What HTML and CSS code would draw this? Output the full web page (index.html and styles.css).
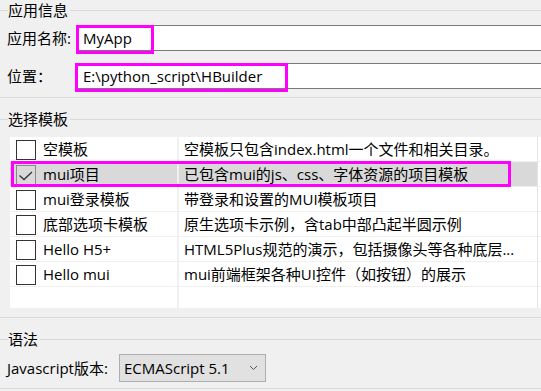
FILE: index.html
```html
<!DOCTYPE html>
<html lang="zh-CN">
<head>
<meta charset="utf-8">
<title>新建移动App</title>
<link rel="stylesheet" href="styles.css">
</head>
<body>
<section class="group g-app">
  <div class="legend"><span>应用信息</span></div>
  <div class="field-row r1">
    <span class="label">应用名称:</span>
    <div class="field"><span class="val">MyApp</span><span class="mark m1"></span></div>
  </div>
  <div class="field-row r2">
    <span class="label">位置：</span>
    <div class="field"><span class="val">E:\python_script\HBuilder</span><span class="mark m2"></span></div>
  </div>
</section>

<section class="group g-tpl">
  <div class="legend"><span>选择模板</span></div>
  <div class="list">
    <div class="row">
      <div class="cell c1"><span class="cb"></span><span class="txt">空模板</span></div>
      <div class="cell c2"><span class="txt">空模板只包含index.html一个文件和相关目录。</span></div>
      <div class="cell c3"></div>
    </div>
    <div class="row sel">
      <div class="cell c1"><span class="cb on"><svg width="18" height="18" viewBox="0 0 18 18"><path d="M2.5 9.5 L7 13.5 L15 6" fill="none" stroke="#333" stroke-width="1.3"/></svg></span><span class="txt">mui项目</span></div>
      <div class="cell c2"><span class="txt">已包含mui的js、css、字体资源的项目模板</span></div>
      <div class="cell c3"></div>
    </div>
    <div class="row">
      <div class="cell c1"><span class="cb"></span><span class="txt">mui登录模板</span></div>
      <div class="cell c2"><span class="txt">带登录和设置的MUI模板项目</span></div>
      <div class="cell c3"></div>
    </div>
    <div class="row">
      <div class="cell c1"><span class="cb"></span><span class="txt">底部选项卡模板</span></div>
      <div class="cell c2"><span class="txt">原生选项卡示例，含tab中部凸起半圆示例</span></div>
      <div class="cell c3"></div>
    </div>
    <div class="row">
      <div class="cell c1"><span class="cb"></span><span class="txt">Hello H5+</span></div>
      <div class="cell c2"><span class="txt">HTML5Plus规范的演示，包括摄像头等各种底层...</span></div>
      <div class="cell c3"></div>
    </div>
    <div class="row">
      <div class="cell c1"><span class="cb"></span><span class="txt">Hello mui</span></div>
      <div class="cell c2"><span class="txt">mui前端框架各种UI控件（如按钮）的展示</span></div>
      <div class="cell c3"></div>
    </div>
    <div class="row filler">
      <div class="cell c1"></div>
      <div class="cell c2"></div>
      <div class="cell c3"></div>
    </div>
    <span class="row-mark"></span>
  </div>
</section>

<section class="group g-syntax">
  <div class="legend"><span>语法</span></div>
  <div class="combo-row">
    <span class="label wide">Javascript版本:</span>
    <div class="combo">
      <span class="val">ECMAScript 5.1</span>
      <svg class="chev" width="9" height="6" viewBox="0 0 9 6"><path d="M1 1 L4.5 4.5 L8 1" fill="none" stroke="#555" stroke-width="1"/></svg>
    </div>
  </div>
</section>
</body>
</html>
```

FILE: styles.css
```css
html, body {
  margin: 0;
  padding: 0;
}

body {
  width: 541px;
  height: 391px;
  overflow: hidden;
  background: #f0f0f0;
  color: #000;
  font-family: "Open Sans", "Noto Sans CJK SC", sans-serif;
  font-size: 15px;
  line-height: 20px;
}

.group {
  border-bottom: 1px solid #d9d9d9;
}

.g-app {
  padding-bottom: 8px;
}

.g-tpl {
  padding-top: 11px;
  padding-bottom: 9px;
}

.g-syntax {
  padding-top: 11px;
  padding-bottom: 6px;
}

.legend {
  display: flex;
  align-items: center;
  height: 21px;
}

.legend::before {
  content: "";
  width: 8px;
  border-top: 1px solid #d9d9d9;
}

.legend::after {
  content: "";
  flex: 1;
  border-top: 1px solid #d9d9d9;
}

.legend span {
  padding-right: 2px;
  line-height: 21px;
  white-space: nowrap;
}

/* form rows */
.field-row {
  display: flex;
  align-items: center;
  height: 26px;
  margin-top: 4px;
}

.field-row.r2 {
  margin-top: 12px;
}

.label {
  box-sizing: border-box;
  width: 76px;
  padding-left: 7px;
  white-space: nowrap;
}

.label.wide {
  width: 119px;
}

.field {
  position: relative;
  flex: 1;
  box-sizing: border-box;
  height: 26px;
  border: 1px solid #7a7a7a;
  border-right: none;
  background: #fff;
  display: flex;
  align-items: center;
  padding-left: 6px;
  white-space: nowrap;
}

.mark {
  position: absolute;
  top: -1px;
  left: -1px;
  box-sizing: border-box;
  height: 29px;
  border: 3px solid #ff00ff;
}

.m1 {
  width: 78px;
}

.m2 {
  left: -2px;
  width: 213px;
}

/* template list */
.list {
  position: relative;
  margin: 7px 0 0 10px;
  height: 171px;
  background: #fff;
  overflow: hidden;
}

.row {
  display: grid;
  grid-template-columns: 169px 359px 1fr;
  height: 25px;
}

.row.filler {
  height: 21px;
}

.cell {
  box-sizing: border-box;
  display: flex;
  align-items: center;
  border-bottom: 1px solid #f0f0f0;
  white-space: nowrap;
  overflow: hidden;
}

.filler .cell {
  border-bottom: none;
}

.c1 {
  border-right: 2px solid #f0f0f0;
  padding-left: 6px;
}

.c2 {
  border-right: 1px solid #e3e3e3;
  padding-left: 5px;
}

.row.sel .c1,
.row.sel .c2 {
  background: #d9d9d9;
}

.cb {
  box-sizing: border-box;
  flex: none;
  align-self: flex-start;
  width: 20px;
  height: 20px;
  margin-top: 3px;
  margin-right: 7px;
  border: 1px solid #333;
  background: #fff;
  display: flex;
  align-items: center;
  justify-content: center;
}

.cb.on {
  background: transparent;
  border-color: #8a8a8a;
}

.row-mark {
  position: absolute;
  left: 1px;
  top: 24px;
  box-sizing: border-box;
  width: 500px;
  height: 26px;
  border: 3px solid #ff00ff;
}

/* syntax */
.combo-row {
  display: flex;
  align-items: center;
  height: 28px;
  margin-top: 4px;
}

.combo {
  box-sizing: border-box;
  width: 147px;
  height: 28px;
  border: 1px solid #adadad;
  background: #e1e1e1;
  display: flex;
  align-items: center;
  justify-content: space-between;
  padding: 0 7px 0 4px;
  white-space: nowrap;
}

.chev {
  display: block;
}
```
